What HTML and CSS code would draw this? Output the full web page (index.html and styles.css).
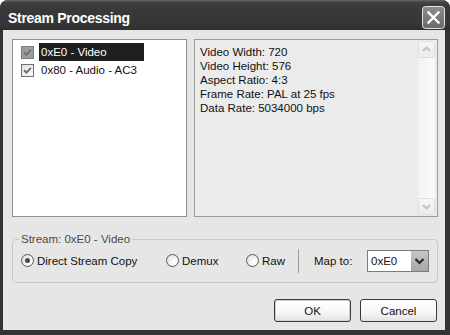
FILE: index.html
```html
<!DOCTYPE html>
<html>
<head>
<meta charset="utf-8">
<link rel="stylesheet" href="styles.css">
</head>
<body>
<div class="window">
  <div class="titlebar">
    <span class="title">Stream Processing</span>
    <div class="close">
      <svg width="23" height="23" viewBox="0 0 23 23">
        <defs>
          <linearGradient id="cg" x1="0" y1="0" x2="0" y2="1">
            <stop offset="0" stop-color="#8c8c8c"/>
            <stop offset="1" stop-color="#6a6a6a"/>
          </linearGradient>
        </defs>
        <rect x="0.5" y="0.5" width="22" height="22" rx="3" fill="url(#cg)" stroke="#e4e4e4"/>
        <path d="M6.5 6.5 L16.5 16.5 M16.5 6.5 L6.5 16.5" stroke="#ffffff" stroke-width="2.4" stroke-linecap="square"/>
      </svg>
    </div>
  </div>
  <div class="client">
    <div class="top">
      <div class="list">
        <div class="item">
          <span class="cb">
            <svg width="13" height="13" viewBox="0 0 13 13">
              <rect x="0.5" y="0.5" width="12" height="12" fill="#9c9c9c" stroke="#7e7e7e"/>
              <path d="M3 6.2 L5.3 8.6 L10 3.9" fill="none" stroke="#6e6e6e" stroke-width="1.8"/>
            </svg>
          </span>
          <span class="label sel">0xE0 - Video</span>
        </div>
        <div class="item">
          <span class="cb">
            <svg width="13" height="13" viewBox="0 0 13 13">
              <defs>
                <linearGradient id="cbg" x1="0" y1="0" x2="1" y2="1">
                  <stop offset="0" stop-color="#e2e2e2"/>
                  <stop offset="1" stop-color="#fafafa"/>
                </linearGradient>
              </defs>
              <rect x="0.5" y="0.5" width="12" height="12" fill="url(#cbg)" stroke="#6e6e6e"/>
              <path d="M3 6.2 L5.3 8.6 L10 3.9" fill="none" stroke="#6a6a6a" stroke-width="1.8"/>
            </svg>
          </span>
          <span class="label">0x80 - Audio - AC3</span>
        </div>
      </div>
      <div class="info">
        <div class="info-text">
          <div>Video Width: 720</div>
          <div>Video Height: 576</div>
          <div>Aspect Ratio: 4:3</div>
          <div>Frame Rate: PAL at 25 fps</div>
          <div>Data Rate: 5034000 bps</div>
        </div>
        <div class="scrollbar">
          <div class="sb-btn">
            <svg width="15" height="15" viewBox="0 0 15 15"><path d="M4 9 L7.5 5.5 L11 9" fill="none" stroke="#c4c4c4" stroke-width="2"/></svg>
          </div>
          <div class="sb-track"></div>
          <div class="sb-btn">
            <svg width="15" height="15" viewBox="0 0 15 15"><path d="M4 6 L7.5 9.5 L11 6" fill="none" stroke="#c4c4c4" stroke-width="2"/></svg>
          </div>
        </div>
      </div>
    </div>
    <fieldset class="group">
      <legend>Stream: 0xE0 - Video</legend>
      <div class="row">
        <span class="radio w1"><span class="dot on"></span>Direct Stream Copy</span>
        <span class="radio w2"><span class="dot"></span>Demux</span>
        <span class="radio w3"><span class="dot"></span>Raw</span>
        <span class="sep"></span>
        <span class="mapto">Map to:</span>
        <div class="select">
          <span class="sel-text">0xE0</span>
          <span class="dd">
            <svg width="17" height="20" viewBox="0 0 17 20"><path d="M4.5 8 L8.5 12 L12.5 8" fill="none" stroke="#2a2a2a" stroke-width="2.2"/></svg>
          </span>
        </div>
      </div>
    </fieldset>
    <div class="buttons">
      <button class="btn default">OK</button>
      <button class="btn">Cancel</button>
    </div>
  </div>
</div>
</body>
</html>
```
FILE: styles.css
```css
html, body {
  margin: 0;
  padding: 0;
  background: #ffffff;
}
body {
  font-family: "Liberation Sans", Arial, sans-serif;
  font-size: 11.5px;
  color: #111111;
}
.window {
  width: 450px;
  height: 335px;
  display: flex;
  flex-direction: column;
  background: #333333;
  border-radius: 8px 8px 0 0;
  overflow: hidden;
}
.titlebar {
  height: 30px;
  display: flex;
  align-items: flex-start;
  background: linear-gradient(#6a6a6a 0, #444444 2px, #3a3a3a 6px, #363636 24px, #2e2e2e 30px);
  flex: none;
}
.title {
  color: #ffffff;
  font-weight: bold;
  font-size: 14px;
  letter-spacing: -0.3px;
  line-height: 16px;
  margin: 10px 0 0 8px;
}
.close {
  margin: 6px 5px 0 auto;
  width: 23px;
  height: 23px;
  line-height: 0;
}
.client {
  flex: 1;
  margin: 0 5px 5px 3px;
  background: #e6e6e6;
  padding: 9px 7px 0 9px;
  display: flex;
  flex-direction: column;
}
.top {
  display: flex;
  gap: 7px;
  height: 178px;
  flex: none;
}
.list {
  width: 175px;
  box-sizing: border-box;
  border: 1px solid #8e8e8e;
  background: #ffffff;
  padding: 3px 0 0 8px;
}
.item {
  height: 18px;
  display: flex;
  align-items: center;
}
.cb {
  width: 13px;
  height: 13px;
  margin-right: 5px;
  line-height: 0;
}
.label {
  padding: 0 2px;
  line-height: 18px;
  white-space: nowrap;
}
.label.sel {
  width: 105px;
  box-sizing: border-box;
  background: #1f1f1f;
  color: #ffffff;
}
.info {
  flex: 1;
  box-sizing: border-box;
  border: 1px solid #9c9c9c;
  background: #ebebeb;
  display: flex;
}
.info-text {
  flex: 1;
  padding: 5px 0 0 5px;
  line-height: 14px;
  white-space: nowrap;
}
.scrollbar {
  width: 17px;
  margin: 1px 2px 1px 0;
  display: flex;
  flex-direction: column;
  background: linear-gradient(to right, #f2f2f2, #fbfbfb);
}
.sb-btn {
  height: 17px;
  box-sizing: border-box;
  border: 1px solid #dedede;
  border-radius: 2px;
  background: linear-gradient(#f6f6f6, #ececec);
  display: flex;
  align-items: center;
  justify-content: center;
  line-height: 0;
}
.sb-track {
  flex: 1;
}
.group {
  margin: 16px 0 0 0;
  padding: 3px 8px 10px 6px;
  border: 1px solid #c8c8c8;
  border-radius: 4px;
  min-width: 0;
}
.group legend {
  padding: 0 2px;
  line-height: 13px;
  color: #4a4a4a;
}
.row {
  display: flex;
  align-items: center;
  height: 23px;
  margin-left: 2px;
}
.radio {
  display: flex;
  align-items: center;
  white-space: nowrap;
}
.w1 { width: 145px; }
.w2 { width: 80px; }
.w3 { width: 52px; }
.dot {
  width: 13px;
  height: 13px;
  box-sizing: border-box;
  border: 1px solid #5a5a5a;
  border-radius: 50%;
  background: radial-gradient(circle at 65% 65%, #ffffff 0, #f4f4f4 40%, #d4d4d4 100%);
  margin-right: 3px;
  position: relative;
}
.dot.on::after {
  content: "";
  position: absolute;
  left: 3px;
  top: 3px;
  width: 5px;
  height: 5px;
  border-radius: 50%;
  background: #4a4a4a;
}
.sep {
  width: 1px;
  height: 24px;
  background: #9a9a9a;
}
.mapto {
  margin-left: 15px;
  width: 53px;
  white-space: nowrap;
}
.select {
  width: 62px;
  height: 22px;
  box-sizing: border-box;
  border: 1px solid #7c7c7c;
  background: #ffffff;
  display: flex;
  align-items: center;
}
.sel-text {
  flex: 1;
  padding-left: 3px;
}
.dd {
  width: 17px;
  height: 20px;
  background: linear-gradient(#c6c6c6, #a6a6a6);
  line-height: 0;
}
.buttons {
  display: flex;
  justify-content: flex-end;
  gap: 9px;
  margin: 16px 1px 0 0;
}
.btn {
  width: 77px;
  height: 23px;
  box-sizing: border-box;
  border: 1px solid #3a3a3a;
  border-radius: 3px;
  background: linear-gradient(#ffffff 0, #f6f6f6 60%, #e2e2e2 100%);
  font-family: "Liberation Sans", Arial, sans-serif;
  font-size: 11.5px;
  color: #111111;
  padding: 0;
}
.btn.default {
  box-shadow: inset 0 0 0 1px #d2d2d2;
}
```
